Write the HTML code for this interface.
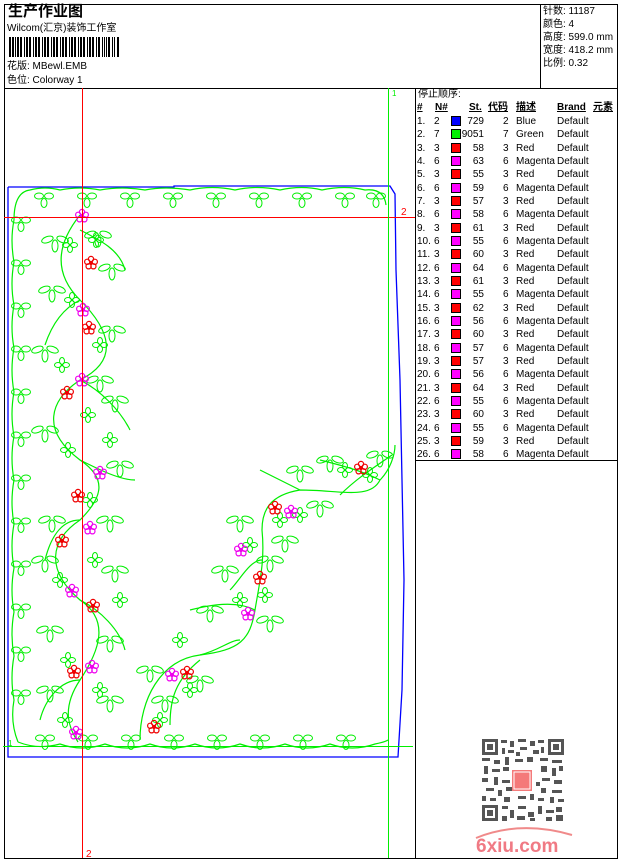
<!DOCTYPE html>
<html><head><meta charset="utf-8"><style>
*{margin:0;padding:0;box-sizing:border-box}
body{width:620px;height:860px;background:#fff;position:relative;overflow:hidden;font-family:"Liberation Sans","WenQuanYi Zen Hei","Noto Sans CJK SC",sans-serif;color:#000}
.a{position:absolute;white-space:nowrap}
.t{font-size:10px;line-height:12px}
.sw{position:absolute;width:10px;height:10px;border:1px solid #000}
</style></head><body>
<svg class="a" style="left:0;top:0" width="620" height="860">
<rect x="4.5" y="4.5" width="613" height="854" fill="none" stroke="#000"/>
<line x1="4" y1="88.5" x2="618" y2="88.5" stroke="#000"/>
<line x1="540.5" y1="4" x2="540.5" y2="88" stroke="#000"/>
<line x1="415.5" y1="88" x2="415.5" y2="858" stroke="#000"/>
<line x1="415" y1="460.5" x2="618" y2="460.5" stroke="#000"/>
<g fill="#000">
<rect x="9" y="37" width="2" height="20"/><rect x="12" y="37" width="2" height="20"/><rect x="15" y="37" width="1" height="20"/><rect x="17" y="37" width="2" height="20"/><rect x="20" y="37" width="2" height="20"/><rect x="24" y="37" width="1" height="20"/><rect x="26" y="37" width="2" height="20"/><rect x="29" y="37" width="2" height="20"/><rect x="33" y="37" width="1" height="20"/><rect x="35" y="37" width="2" height="20"/><rect x="38" y="37" width="2" height="20"/><rect x="42" y="37" width="1" height="20"/><rect x="44" y="37" width="2" height="20"/><rect x="47" y="37" width="2" height="20"/><rect x="51" y="37" width="1" height="20"/><rect x="53" y="37" width="2" height="20"/><rect x="56" y="37" width="2" height="20"/><rect x="60" y="37" width="1" height="20"/><rect x="62" y="37" width="2" height="20"/><rect x="65" y="37" width="2" height="20"/><rect x="69" y="37" width="1" height="20"/><rect x="71" y="37" width="2" height="20"/><rect x="74" y="37" width="2" height="20"/><rect x="78" y="37" width="1" height="20"/><rect x="80" y="37" width="2" height="20"/><rect x="83" y="37" width="2" height="20"/><rect x="87" y="37" width="1" height="20"/><rect x="89" y="37" width="2" height="20"/><rect x="92" y="37" width="2" height="20"/><rect x="96" y="37" width="1" height="20"/><rect x="98" y="37" width="2" height="20"/><rect x="102" y="37" width="1" height="20"/><rect x="104" y="37" width="1" height="20"/><rect x="106" y="37" width="1" height="20"/><rect x="108" y="37" width="2" height="20"/><rect x="112" y="37" width="1" height="20"/><rect x="114" y="37" width="1" height="20"/><rect x="117" y="37" width="2" height="20"/>
</g>
<polyline points="8,187 174,187 174,186 390,186 395,194 396,270 400,380 404,580 402,690 398,757 8,757 8,187" fill="none" stroke="#00f" stroke-width="1.3"/>
<defs>
<g id="c" fill="none" stroke="#0e0" stroke-width="1">
<ellipse cx="-5" cy="-2" rx="4.5" ry="3"/><ellipse cx="5" cy="-2" rx="4.5" ry="3"/><ellipse cx="0" cy="5" rx="3" ry="4.5"/>
</g>
<g id="l" fill="none" stroke="#0e0" stroke-width="1">
<ellipse cx="-7" cy="-3" rx="6" ry="3" transform="rotate(-20)"/><ellipse cx="7" cy="-3" rx="6" ry="3" transform="rotate(20)"/><ellipse cx="0" cy="6" rx="3" ry="6"/>
</g>
<g id="s" fill="none" stroke="#0e0" stroke-width="1">
<ellipse cx="-4" cy="0" rx="3.5" ry="2.5"/><ellipse cx="4" cy="0" rx="3.5" ry="2.5"/><ellipse cx="0" cy="-4" rx="2.5" ry="3.5"/><ellipse cx="0" cy="4" rx="2.5" ry="3.5"/>
</g>
<g id="r" fill="none" stroke="#e00" stroke-width="1.2">
<circle cx="0" cy="-4" r="2.6"/><circle cx="3.8" cy="-1.2" r="2.6"/><circle cx="2.4" cy="3.3" r="2.6"/><circle cx="-2.4" cy="3.3" r="2.6"/><circle cx="-3.8" cy="-1.2" r="2.6"/><circle cx="0" cy="0" r="1.2" fill="#e00"/>
</g>
<g id="m" fill="none" stroke="#e0e" stroke-width="1.2">
<circle cx="0" cy="-4" r="2.6"/><circle cx="3.8" cy="-1.2" r="2.6"/><circle cx="2.4" cy="3.3" r="2.6"/><circle cx="-2.4" cy="3.3" r="2.6"/><circle cx="-3.8" cy="-1.2" r="2.6"/><circle cx="0" cy="0" r="1.2" fill="#e0e"/>
</g>
</defs>
<g fill="none" stroke="#0e0" stroke-width="1.2">
<path d="M14,220 Q14,192 30,190 Q45,186 60,190 Q80,186 100,190 Q122,186 145,190 Q165,186 190,190 Q212,185 235,190 Q257,185 280,190 Q302,185 322,190 Q345,185 365,190 Q384,188 386,205"/>
<path d="M14,220 Q10,240 14,262 Q10,284 14,305 Q10,327 14,348 Q10,370 14,392 Q10,414 14,436 Q10,458 14,480 Q10,502 14,524 Q10,546 14,568 Q10,590 14,612 Q10,634 14,656 Q10,678 14,700 Q10,722 18,742"/>
<path d="M18,742 Q38,750 60,744 Q82,752 105,744 Q127,752 150,744 Q172,752 195,744 Q217,752 240,744 Q262,752 285,744 Q307,752 330,744 Q352,752 375,744 Q385,742 388,740"/>
<path d="M80,215 C60,240 50,270 80,300 C110,330 120,360 80,380 C50,400 40,430 80,460 C110,480 100,500 80,520 C50,540 45,570 80,600 C110,620 100,650 80,680 C60,710 70,730 78,742"/>
<path d="M80,230 C100,240 120,250 125,270 M80,300 C60,310 50,330 45,345 M80,380 C100,390 120,410 130,430 M80,460 C100,470 120,480 135,480 M80,520 C60,520 50,540 45,560 M80,600 C100,610 120,630 125,650 M80,680 C60,680 45,700 40,720"/>
<path d="M140,740 C140,700 160,660 200,655 C240,650 250,640 255,610 C260,580 265,560 262,530 C262,510 270,495 300,490 C340,490 370,500 380,480 C390,470 395,455 395,445"/>
<path d="M170,725 C170,700 175,680 200,660 M255,610 C235,600 210,605 190,610 M262,560 C250,560 240,580 230,590 M300,490 C280,480 270,475 260,470 M340,495 C355,480 370,470 392,455 M380,480 C360,470 340,465 320,460 M200,655 C220,650 230,640 240,640"/>
</g>
<g>
<use href="#c" x="44" y="198"/><use href="#c" x="87" y="198"/><use href="#c" x="130" y="198"/><use href="#c" x="173" y="198"/><use href="#c" x="216" y="198"/><use href="#c" x="259" y="198"/><use href="#c" x="302" y="198"/><use href="#c" x="345" y="198"/><use href="#c" x="376" y="198"/>
<use href="#c" x="21" y="222"/><use href="#c" x="21" y="265"/><use href="#c" x="21" y="308"/><use href="#c" x="21" y="351"/><use href="#c" x="21" y="394"/><use href="#c" x="21" y="437"/><use href="#c" x="21" y="480"/><use href="#c" x="21" y="523"/><use href="#c" x="21" y="566"/><use href="#c" x="21" y="609"/><use href="#c" x="21" y="652"/><use href="#c" x="21" y="695"/>
<use href="#c" x="45" y="740"/><use href="#c" x="88" y="740"/><use href="#c" x="131" y="740"/><use href="#c" x="174" y="740"/><use href="#c" x="217" y="740"/><use href="#c" x="260" y="740"/><use href="#c" x="303" y="740"/><use href="#c" x="346" y="740"/>
<use href="#l" x="55" y="240"/><use href="#l" x="112" y="268"/><use href="#l" x="52" y="290"/><use href="#l" x="112" y="330"/><use href="#l" x="45" y="350"/><use href="#l" x="115" y="400"/><use href="#l" x="45" y="430"/><use href="#l" x="120" y="465"/><use href="#l" x="52" y="520"/><use href="#l" x="110" y="520"/><use href="#l" x="45" y="560"/><use href="#l" x="115" y="570"/><use href="#l" x="50" y="630"/><use href="#l" x="110" y="640"/><use href="#l" x="50" y="690"/><use href="#l" x="110" y="700"/><use href="#l" x="98" y="235"/><use href="#l" x="100" y="380"/>
<use href="#l" x="150" y="670"/><use href="#l" x="200" y="680"/><use href="#l" x="165" y="700"/><use href="#l" x="210" y="610"/><use href="#l" x="270" y="620"/><use href="#l" x="225" y="570"/><use href="#l" x="270" y="560"/><use href="#l" x="240" y="520"/><use href="#l" x="300" y="470"/><use href="#l" x="330" y="460"/><use href="#l" x="380" y="455"/><use href="#l" x="320" y="505"/><use href="#l" x="285" y="540"/>
<use href="#s" x="70" y="245"/><use href="#s" x="96" y="240"/><use href="#s" x="72" y="300"/><use href="#s" x="100" y="345"/><use href="#s" x="62" y="365"/><use href="#s" x="88" y="415"/><use href="#s" x="68" y="450"/><use href="#s" x="110" y="440"/><use href="#s" x="90" y="500"/><use href="#s" x="60" y="580"/><use href="#s" x="95" y="560"/><use href="#s" x="68" y="660"/><use href="#s" x="100" y="690"/><use href="#s" x="65" y="720"/><use href="#s" x="120" y="600"/>
<use href="#s" x="160" y="720"/><use href="#s" x="190" y="690"/><use href="#s" x="240" y="600"/><use href="#s" x="265" y="595"/><use href="#s" x="250" y="545"/><use href="#s" x="300" y="515"/><use href="#s" x="280" y="520"/><use href="#s" x="370" y="475"/><use href="#s" x="345" y="470"/><use href="#s" x="180" y="640"/>
<use href="#r" x="91" y="263"/><use href="#r" x="89" y="328"/><use href="#r" x="67" y="393"/><use href="#r" x="78" y="496"/><use href="#r" x="62" y="541"/><use href="#r" x="93" y="606"/><use href="#r" x="74" y="672"/><use href="#r" x="154" y="727"/><use href="#r" x="187" y="673"/><use href="#r" x="260" y="578"/><use href="#r" x="275" y="508"/><use href="#r" x="361" y="468"/>
<use href="#m" x="82" y="216"/><use href="#m" x="83" y="310"/><use href="#m" x="82" y="380"/><use href="#m" x="100" y="473"/><use href="#m" x="90" y="528"/><use href="#m" x="72" y="591"/><use href="#m" x="92" y="667"/><use href="#m" x="76" y="733"/><use href="#m" x="172" y="675"/><use href="#m" x="248" y="614"/><use href="#m" x="241" y="550"/><use href="#m" x="291" y="512"/>
</g>
<line x1="82.5" y1="88" x2="82.5" y2="858" stroke="#f00"/>
<line x1="4" y1="217.5" x2="415" y2="217.5" stroke="#f00"/>
<line x1="388.5" y1="88" x2="388.5" y2="858" stroke="#0e0"/>
<line x1="3" y1="746.5" x2="413" y2="746.5" stroke="#0e0"/>
<text x="86" y="857" font-size="10" fill="#f00" font-family="Liberation Sans">2</text>
<text x="401" y="215" font-size="10" fill="#f00" font-family="Liberation Sans">2</text>
<text x="392" y="96" font-size="8" fill="#0e0" font-family="Liberation Sans">1</text>
<text x="8" y="746" font-size="8" fill="#0e0" font-family="Liberation Sans">1</text>
<g fill="#555">
<rect x="482" y="739" width="16" height="16"/><rect x="548" y="739" width="16" height="16"/><rect x="482" y="805" width="16" height="16"/>
<rect x="485" y="742" width="10" height="10" fill="#fff"/><rect x="551" y="742" width="10" height="10" fill="#fff"/><rect x="485" y="808" width="10" height="10" fill="#fff"/>
<rect x="487" y="744" width="6" height="6"/><rect x="553" y="744" width="6" height="6"/><rect x="487" y="810" width="6" height="6"/>
<rect x="501" y="740" width="6" height="3"/><rect x="510" y="741" width="4" height="6"/><rect x="518" y="739" width="8" height="3"/><rect x="530" y="741" width="5" height="5"/><rect x="538" y="740" width="6" height="3"/>
<rect x="502" y="748" width="3" height="6"/><rect x="508" y="750" width="6" height="3"/><rect x="520" y="747" width="7" height="3"/><rect x="533" y="750" width="6" height="4"/><rect x="541" y="747" width="3" height="6"/><rect x="516" y="752" width="4" height="4"/>
<rect x="482" y="758" width="8" height="3"/><rect x="494" y="760" width="6" height="4"/><rect x="505" y="757" width="4" height="8"/><rect x="515" y="759" width="8" height="3"/><rect x="527" y="757" width="6" height="5"/><rect x="540" y="758" width="8" height="3"/><rect x="552" y="760" width="10" height="3"/>
<rect x="484" y="766" width="4" height="8"/><rect x="492" y="769" width="8" height="3"/><rect x="503" y="767" width="6" height="4"/><rect x="541" y="766" width="6" height="6"/><rect x="552" y="768" width="4" height="8"/><rect x="559" y="766" width="4" height="5"/>
<rect x="482" y="778" width="6" height="4"/><rect x="494" y="777" width="4" height="8"/><rect x="502" y="780" width="8" height="3"/><rect x="536" y="782" width="4" height="4"/><rect x="542" y="778" width="8" height="3"/><rect x="554" y="780" width="8" height="4"/>
<rect x="486" y="788" width="8" height="3"/><rect x="498" y="790" width="4" height="6"/><rect x="506" y="787" width="6" height="4"/><rect x="518" y="796" width="8" height="3"/><rect x="530" y="794" width="4" height="6"/><rect x="541" y="788" width="5" height="5"/><rect x="552" y="790" width="10" height="3"/>
<rect x="482" y="796" width="4" height="5"/><rect x="490" y="798" width="6" height="3"/><rect x="504" y="797" width="6" height="5"/><rect x="538" y="798" width="6" height="3"/><rect x="550" y="797" width="4" height="6"/><rect x="558" y="799" width="6" height="3"/>
<rect x="502" y="806" width="6" height="3"/><rect x="510" y="810" width="4" height="8"/><rect x="518" y="806" width="8" height="3"/><rect x="528" y="812" width="6" height="5"/><rect x="538" y="806" width="4" height="8"/><rect x="546" y="810" width="8" height="3"/><rect x="556" y="807" width="6" height="5"/>
<rect x="502" y="816" width="5" height="5"/><rect x="517" y="816" width="8" height="4"/><rect x="530" y="818" width="5" height="3"/><rect x="546" y="817" width="6" height="4"/><rect x="556" y="815" width="7" height="6"/>
</g>
<rect x="512" y="770" width="20" height="21" fill="#f47a7a"/>
<rect x="514" y="772" width="16" height="17" fill="none" stroke="#fff" stroke-width="1"/>
<path d="M476,838 Q520,820 572,835" fill="none" stroke="#f08a8a" stroke-width="2"/>
<text x="476" y="852" font-size="19" font-weight="bold" fill="#f07a84" font-family="Liberation Sans">6xiu.com</text>
</svg>
<div class="a" style="left:8px;top:3px;font-size:15px;font-weight:bold;line-height:18px">生产作业图</div>
<div class="a t" style="left:7px;top:23px">Wilcom(汇京)装饰工作室</div>
<div class="a t" style="left:7px;top:61px">花版: MBewl.EMB</div>
<div class="a t" style="left:7px;top:75px">色位: Colorway 1</div>
<div class="a t" style="left:543px;top:5px;line-height:13px">针数: 11187<br>颜色: 4<br>高度: 599.0 mm<br>宽度: 418.2 mm<br>比例: 0.32</div>
<div class="a t" style="left:418px;top:89px">停止顺序:</div>
<div class="a t" style="left:417px;top:102px;font-weight:bold;text-decoration:underline">#</div>
<div class="a t" style="left:435px;top:102px;font-weight:bold;text-decoration:underline">N#</div>
<div class="a t" style="left:469px;top:102px;font-weight:bold;text-decoration:underline">St.</div>
<div class="a t" style="left:488px;top:102px;font-weight:bold;text-decoration:underline">代码</div>
<div class="a t" style="left:516px;top:102px;font-weight:bold;text-decoration:underline">描述</div>
<div class="a t" style="left:557px;top:102px;font-weight:bold;text-decoration:underline">Brand</div>
<div class="a t" style="left:593px;top:102px;font-weight:bold;text-decoration:underline">元素</div>
<div class="a t" style="left:0;top:0">
<div class="a" style="left:417px;top:115px;line-height:13.33px">1.<br>2.<br>3.<br>4.<br>5.<br>6.<br>7.<br>8.<br>9.<br>10.<br>11.<br>12.<br>13.<br>14.<br>15.<br>16.<br>17.<br>18.<br>19.<br>20.<br>21.<br>22.<br>23.<br>24.<br>25.<br>26.</div>
<div class="a" style="left:434px;top:115px;line-height:13.33px">2<br>7<br>3<br>6<br>3<br>6<br>3<br>6<br>3<br>6<br>3<br>6<br>3<br>6<br>3<br>6<br>3<br>6<br>3<br>6<br>3<br>6<br>3<br>6<br>3<br>6</div>
<div class="a" style="left:455px;top:115px;width:29px;text-align:right;line-height:13.33px">729<br>9051<br>58<br>63<br>55<br>59<br>57<br>58<br>61<br>55<br>60<br>64<br>61<br>55<br>62<br>56<br>60<br>57<br>57<br>56<br>64<br>55<br>60<br>55<br>59<br>58</div>
<div class="a" style="left:503px;top:115px;line-height:13.33px">2<br>7<br>3<br>6<br>3<br>6<br>3<br>6<br>3<br>6<br>3<br>6<br>3<br>6<br>3<br>6<br>3<br>6<br>3<br>6<br>3<br>6<br>3<br>6<br>3<br>6</div>
<div class="a" style="left:516px;top:115px;line-height:13.33px">Blue<br>Green<br>Red<br>Magenta<br>Red<br>Magenta<br>Red<br>Magenta<br>Red<br>Magenta<br>Red<br>Magenta<br>Red<br>Magenta<br>Red<br>Magenta<br>Red<br>Magenta<br>Red<br>Magenta<br>Red<br>Magenta<br>Red<br>Magenta<br>Red<br>Magenta</div>
<div class="a" style="left:557px;top:115px;line-height:13.33px">Default<br>Default<br>Default<br>Default<br>Default<br>Default<br>Default<br>Default<br>Default<br>Default<br>Default<br>Default<br>Default<br>Default<br>Default<br>Default<br>Default<br>Default<br>Default<br>Default<br>Default<br>Default<br>Default<br>Default<br>Default<br>Default</div>
</div>
<div class="sw" style="left:451px;top:116px;background:#00f"></div>
<div class="sw" style="left:451px;top:129px;background:#0e0"></div>
<div class="sw" style="left:451px;top:143px;background:#f00"></div>
<div class="sw" style="left:451px;top:156px;background:#f0f"></div>
<div class="sw" style="left:451px;top:169px;background:#f00"></div>
<div class="sw" style="left:451px;top:183px;background:#f0f"></div>
<div class="sw" style="left:451px;top:196px;background:#f00"></div>
<div class="sw" style="left:451px;top:209px;background:#f0f"></div>
<div class="sw" style="left:451px;top:223px;background:#f00"></div>
<div class="sw" style="left:451px;top:236px;background:#f0f"></div>
<div class="sw" style="left:451px;top:249px;background:#f00"></div>
<div class="sw" style="left:451px;top:263px;background:#f0f"></div>
<div class="sw" style="left:451px;top:276px;background:#f00"></div>
<div class="sw" style="left:451px;top:289px;background:#f0f"></div>
<div class="sw" style="left:451px;top:303px;background:#f00"></div>
<div class="sw" style="left:451px;top:316px;background:#f0f"></div>
<div class="sw" style="left:451px;top:329px;background:#f00"></div>
<div class="sw" style="left:451px;top:343px;background:#f0f"></div>
<div class="sw" style="left:451px;top:356px;background:#f00"></div>
<div class="sw" style="left:451px;top:369px;background:#f0f"></div>
<div class="sw" style="left:451px;top:383px;background:#f00"></div>
<div class="sw" style="left:451px;top:396px;background:#f0f"></div>
<div class="sw" style="left:451px;top:409px;background:#f00"></div>
<div class="sw" style="left:451px;top:423px;background:#f0f"></div>
<div class="sw" style="left:451px;top:436px;background:#f00"></div>
<div class="sw" style="left:451px;top:449px;background:#f0f"></div>
</body></html>
